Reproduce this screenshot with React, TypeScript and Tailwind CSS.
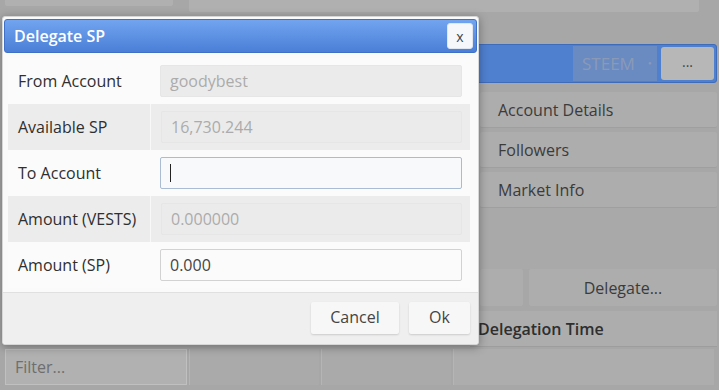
import React from 'react';

const font = { fontFamily: '"Open Sans", "Noto Sans", sans-serif' };

function Row({ label, shaded, children }: { label: string; shaded?: boolean; children: React.ReactNode }) {
  return (
    <div className={`flex h-[46px] ${shaded ? 'bg-[#ececec]' : 'bg-[#fbfbfb]'}`}>
      <div className="w-[142px] flex items-center pl-[10px] text-[16px] font-medium text-[#2f2f2f]">{label}</div>
      <div className={`flex-1 flex items-center pl-[10px] pr-[8px] ${shaded ? 'border-l border-[#f8f8f8]' : ''}`}>
        {children}
      </div>
    </div>
  );
}

function Field({ value, disabled, focus }: { value: string; disabled?: boolean; focus?: boolean }) {
  if (focus) {
    return (
      <div className="h-[32px] w-full rounded-[2px] border border-[#a9bcd3] bg-[#f8f9fa] flex items-center pl-[9px]">
        <div className="w-px h-[18px] bg-[#222]" />
      </div>
    );
  }
  return (
    <div
      className={`h-[32px] w-full rounded-[2px] flex items-center pl-[9px] text-[16px] ${
        disabled ? 'bg-[#ebebeb] border border-[#e6e6e6] text-[#ababab]' : 'bg-[#fbfbfb] border border-[#d2d2d2] text-[#444]'
      }`}
    >
      {value}
    </div>
  );
}

export default function App() {
  return (
    <div className="relative w-[719px] h-[390px] overflow-hidden bg-[#a7a7a7]" style={font}>
      {/* dimmed page behind the dialog */}
      <div className="flex flex-col">
        <div className="flex h-[20px] gap-[16px] px-[5px]">
          <div className="w-[168px] h-[6px] bg-[#b0b0b0] rounded-b-[2px]" />
          <div className="flex-1 h-[12px] bg-[#b0b0b0] rounded-b-[2px] mr-[15px]" />
        </div>
        <div className="flex">
          <div className="w-[470px]" />
          <div className="flex-1 flex flex-col pr-[2px]">
            <div className="mt-[24px] h-[39px] bg-[#4f7fcf] border border-[#3f6cba] rounded-[3px] flex items-center justify-end gap-[4px] pr-[2px]">
              <div className="h-[35px] w-[84px] bg-[#6a8bc2] flex items-center pl-[9px] text-[17px] text-[#8a9ab6]">
                STEEM <span className="ml-[13px] text-[6px]">●</span>
              </div>
              <div className="h-[33px] w-[53px] bg-[#b7b7b7] rounded-[3px] flex items-center justify-center text-[14px] text-[#444] pb-[4px]">
                ...
              </div>
            </div>
            <div className="flex flex-col gap-[4px] mt-[9px] pl-[10px]">
              {['Account Details', 'Followers', 'Market Info'].map((t) => (
                <div
                  key={t}
                  className="h-[36px] bg-[#adadad] border-b border-[#9f9f9f] rounded-[2px] flex items-center pl-[18px] text-[16px] text-[#3b3b3b]"
                >
                  {t}
                </div>
              ))}
            </div>
            <div className="h-[61px] ml-[10px] bg-[#a9a9a9]" />
            <div className="flex gap-[6px] ml-[10px] h-[37px]">
              <div className="w-[43px] bg-[#adadad] rounded-[2px]" />
              <div className="flex-1 bg-[#adadad] rounded-[2px] flex items-center justify-center text-[16px] text-[#3b3b3b]">
                Delegate...
              </div>
            </div>
            <div className="mt-[5px] h-[36px] bg-[#adadad] border-b border-[#9d9d9d] flex items-center pl-[8px] text-[16px] font-semibold text-[#2e2e2e]">
              Delegation Time
            </div>
          </div>
        </div>
        <div className="flex h-[36px] mt-[2px] mx-[5px] gap-[2px]">
          <div className="w-[182px] bg-[#b1b1b1] border border-[#c0c0c0] flex items-center pl-[9px] text-[16px] text-[#6e6e6e]">
            Filter...
          </div>
          <div className="w-[130px] bg-[#aaaaaa] border-l border-[#b5b5b5]" />
          <div className="w-[130px] bg-[#aaaaaa] border-l border-[#b5b5b5]" />
          <div className="flex-1 bg-[#adadad] border-l border-[#b5b5b5]" />
        </div>
      </div>

      {/* dialog */}
      <div className="absolute left-[2px] top-[16px] w-[477px] h-[329px] bg-[#fafafa] border border-[#d6d6d6] rounded-[3px] shadow-[0_2px_10px_rgba(0,0,0,0.35)] flex flex-col p-[1px]">
        <div className="h-[34px] mt-[1px] rounded-[3px] border border-[#3f70c6] bg-gradient-to-b from-[#72a4ef] to-[#4a7fd7] flex items-center justify-between pl-[9px] pr-[3px]">
          <span className="text-[16px] font-semibold text-white">Delegate SP</span>
          <button className="h-[26px] w-[26px] rounded-[3px] bg-[#f5f7fa] border border-[#dfe6ef] flex items-center justify-center text-[14px] text-[#444]">
            x
          </button>
        </div>
        <div className="flex flex-col mt-[5px] ml-[4px] mr-[7px]">
          <Row label="From Account">
            <Field value="goodybest" disabled />
          </Row>
          <Row label="Available SP" shaded>
            <Field value="16,730.244" disabled />
          </Row>
          <Row label="To Account">
            <Field value="" focus />
          </Row>
          <Row label="Amount (VESTS)" shaded>
            <Field value="0.000000" disabled />
          </Row>
          <Row label="Amount (SP)">
            <Field value="0.000" />
          </Row>
        </div>
        <div className="flex-1 mt-[4px] -mx-[1px] -mb-[1px] bg-[#efefef] border-t border-[#e0e0e0] rounded-b-[3px] flex items-start justify-end gap-[10px] pt-[9px] pr-[8px]">
          <button className="h-[32px] w-[88px] rounded-[2px] bg-[#f7f7f7] shadow-[0_1px_2px_rgba(0,0,0,0.15)] text-[16px] text-[#444] pb-[2px]">
            Cancel
          </button>
          <button className="h-[32px] w-[61px] rounded-[2px] bg-[#f7f7f7] shadow-[0_1px_2px_rgba(0,0,0,0.15)] text-[16px] text-[#444] pb-[2px]">
            Ok
          </button>
        </div>
      </div>
    </div>
  );
}
